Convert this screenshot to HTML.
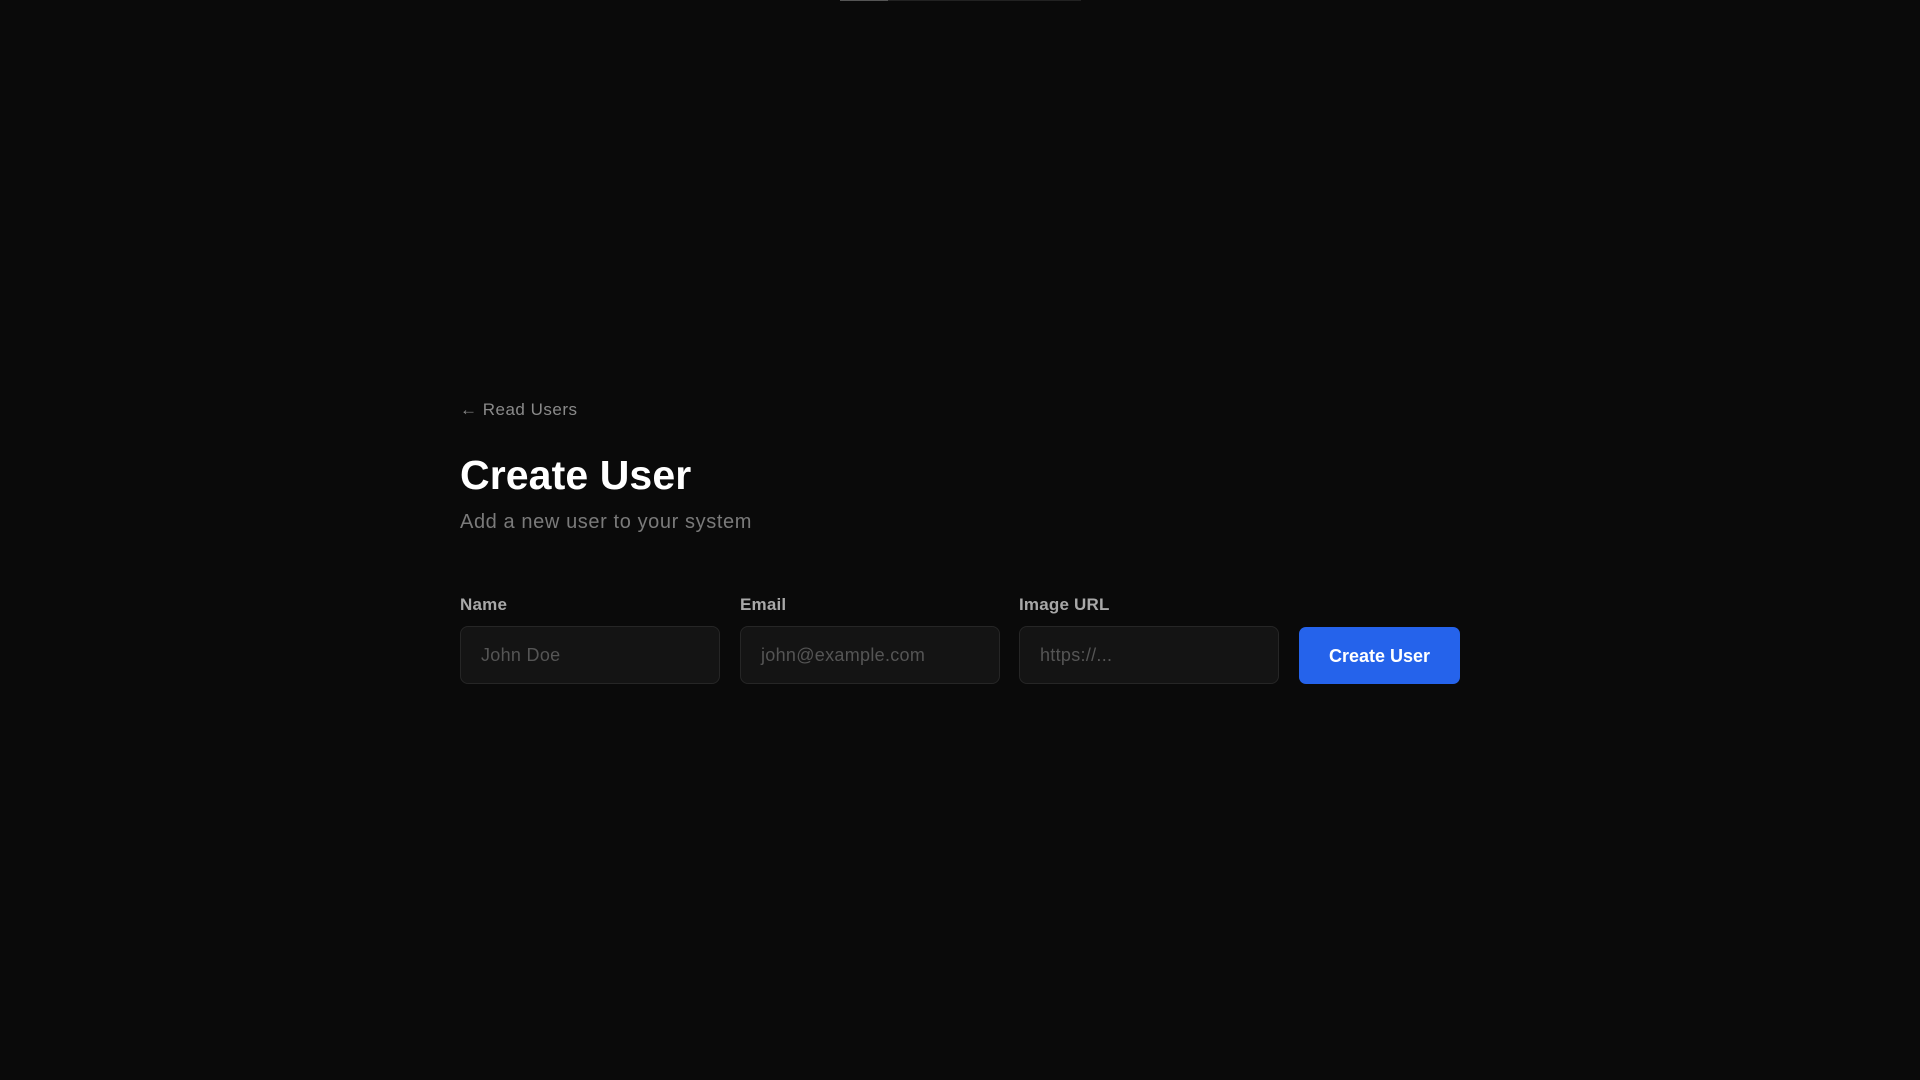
<!DOCTYPE html>
<html><head><style>
html,body{margin:0;background:#0a0a0a;width:1920px;height:1080px;overflow:hidden;font-family:"Liberation Sans",sans-serif;}
.bar{position:absolute;top:0;left:840px;width:241px;height:1px;background:#222}
.bar i{position:absolute;left:0;top:0;width:48px;height:1px;background:#555}
.wrap{position:absolute;left:460px;top:0;}
.back{position:absolute;top:400px;left:0;color:#8a8a8a;font-size:17px;white-space:nowrap;letter-spacing:0.5px}
h1{position:absolute;top:452px;left:0;margin:0;color:#fff;font-size:41px;font-weight:bold;white-space:nowrap;letter-spacing:0.1px}
.sub{position:absolute;top:511px;left:0;color:#7a7a7a;font-size:20px;white-space:nowrap;letter-spacing:0.6px}
.f{position:absolute;top:595px;width:260px}
.f label{display:block;color:#a8a8a8;font-size:17px;font-weight:bold;height:31px;letter-spacing:0.2px}
.f div{box-sizing:border-box;height:58px;background:#141414;border:1px solid #262626;border-radius:8px;color:#555;font-size:18px;line-height:56px;padding-left:20px;letter-spacing:0.3px}
.btn{position:absolute;left:839px;top:627px;width:161px;height:57px;background:#2563eb;border-radius:7px;color:#fff;font-size:18px;font-weight:bold;text-align:center;line-height:58px}
</style></head><body>
<div class="bar"><i></i></div>
<div class="wrap">
<div class="back">← Read Users</div>
<h1>Create User</h1>
<div class="sub">Add a new user to your system</div>
<div class="f" style="left:0"><label>Name</label><div>John Doe</div></div>
<div class="f" style="left:280px"><label>Email</label><div>john@example.com</div></div>
<div class="f" style="left:559px"><label>Image URL</label><div>https://...</div></div>
<div class="btn">Create User</div>
</div>
</body></html>
